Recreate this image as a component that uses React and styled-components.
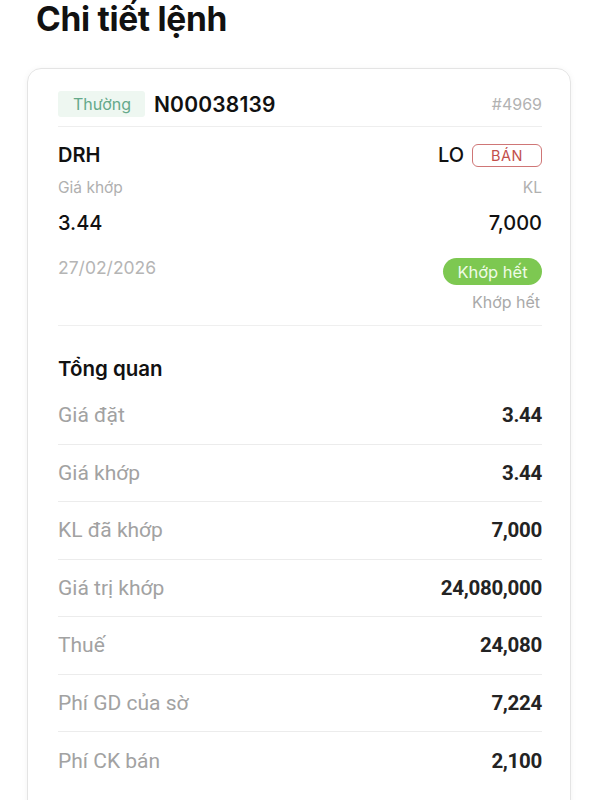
import React from "react";
import styled, { createGlobalStyle } from "styled-components";

const GlobalStyle = createGlobalStyle`
  body {
    margin: 0;
    background: #ffffff;
    font-family: Inter, "Noto Sans", sans-serif;
    color: #111111;
  }
`;

const Page = styled.div`
  width: 600px;
  height: 800px;
  overflow: hidden;
`;

const Title = styled.h1`
  margin: 0;
  padding-left: 36px;
  font-size: 33.5px;
  line-height: 38px;
  font-weight: 700;
  letter-spacing: -0.3px;
`;

const Card = styled.section`
  margin: 30px 29px 0 27px;
  border: 1px solid #e4e4e4;
  border-radius: 14px;
  box-shadow: 0 1px 6px rgba(0, 0, 0, 0.05);
  padding: 21px 28px 40px 30px;
`;

const Row = styled.div`
  display: flex;
  justify-content: space-between;
  align-items: ${(p) => p.$align || "center"};
  height: ${(p) => p.$h}px;
  margin-top: ${(p) => p.$mt || 0}px;
`;

const HeaderRow = styled(Row)`
  box-sizing: content-box;
  padding-bottom: 8px;
  border-bottom: 1px solid #eeeeee;
`;

const Group = styled.div`
  display: flex;
  align-items: center;
  gap: ${(p) => p.$gap || 0}px;
`;

const TypeBadge = styled.span`
  display: inline-flex;
  align-items: center;
  height: 26px;
  padding: 0 14px 0 15px;
  background: #eef7f1;
  color: #65a98a;
  font-size: 16px;
  border-radius: 3px;
`;

const OrderNo = styled.span`
  font-size: 21px;
  font-weight: 600;
  letter-spacing: 0.2px;
`;

const Muted = styled.span`
  color: ${(p) => p.$color || "#b2b2b2"};
  font-size: ${(p) => p.$size || 16}px;
  line-height: 20px;
`;

const Strong = styled.span`
  font-size: ${(p) => p.$size || 20}px;
  font-weight: ${(p) => p.$weight || 600};
  line-height: 24px;
`;

const SideBadge = styled.span`
  display: inline-flex;
  align-items: center;
  justify-content: center;
  box-sizing: border-box;
  width: 70px;
  height: 23px;
  border: 1.5px solid #cf7676;
  border-radius: 6px;
  color: #c24f4b;
  font-size: 14.5px;
  letter-spacing: 0.5px;
`;

const StatusPill = styled.span`
  display: inline-flex;
  align-items: center;
  justify-content: center;
  width: 99px;
  height: 27px;
  border-radius: 14px;
  background: #7dc851;
  color: #effbe6;
  font-size: 16.5px;
`;

const Summary = styled.div`
  padding-bottom: 13px;
  border-bottom: 1px solid #efefef;
`;

const SubStatus = styled.div`
  display: flex;
  justify-content: flex-end;
  margin-top: 7px;
  padding-right: 2px;
  height: 20px;
`;

const SectionTitle = styled.h2`
  margin: 31px 0 0;
  font-size: 20.5px;
  line-height: 24px;
  font-weight: 600;
`;

const List = styled.div`
  margin-top: 6px;
`;

const Line = styled.div`
  display: flex;
  justify-content: space-between;
  align-items: center;
  box-sizing: border-box;
  height: 57.5px;
  border-bottom: ${(p) => (p.$last ? "none" : "1px solid #ececec")};
  font-family: Roboto, "Liberation Sans", sans-serif;
`;

const LineLabel = styled.span`
  color: #a2a2a2;
  font-size: 21px;
`;

const LineValue = styled.span`
  color: #232323;
  font-size: 20.5px;
  font-weight: 700;
  letter-spacing: -0.3px;
`;

const rows = [
  ["Giá đặt", "3.44"],
  ["Giá khớp", "3.44"],
  ["KL đã khớp", "7,000"],
  ["Giá trị khớp", "24,080,000"],
  ["Thuế", "24,080"],
  ["Phí GD của sờ", "7,224"],
  ["Phí CK bán", "2,100"],
];

export default function App() {
  return (
    <Page>
      <GlobalStyle />
      <Title>Chi tiết lệnh</Title>
      <Card>
        <HeaderRow $h={28}>
          <Group $gap={9}>
            <TypeBadge>Thường</TypeBadge>
            <OrderNo>N00038139</OrderNo>
          </Group>
          <Muted>#4969</Muted>
        </HeaderRow>

        <Summary>
          <Row $h={24} $mt={16}>
            <Strong>DRH</Strong>
            <Group $gap={8}>
              <Strong $weight={500}>LO</Strong>
              <SideBadge>BÁN</SideBadge>
            </Group>
          </Row>
          <Row $h={20} $mt={11}>
            <Muted $size={15.5} $color="#b0b0b0">Giá khớp</Muted>
            <Muted $size={15.5} $color="#b0b0b0">KL</Muted>
          </Row>
          <Row $h={26} $mt={12}>
            <Strong $size={20} $weight={500}>3.44</Strong>
            <Strong $size={20} $weight={500}>7,000</Strong>
          </Row>
          <Row $h={27} $mt={22} $align="flex-start">
            <Muted $size={17.5} $color="#b5b5b5">27/02/2026</Muted>
            <StatusPill>Khớp hết</StatusPill>
          </Row>
          <SubStatus>
            <Muted $color="#a9a9a9">Khớp hết</Muted>
          </SubStatus>
        </Summary>

        <SectionTitle>Tổng quan</SectionTitle>
        <List>
          {rows.map(([label, value], i) => (
            <Line key={label} $last={i === rows.length - 1}>
              <LineLabel>{label}</LineLabel>
              <LineValue>{value}</LineValue>
            </Line>
          ))}
        </List>
      </Card>
    </Page>
  );
}
